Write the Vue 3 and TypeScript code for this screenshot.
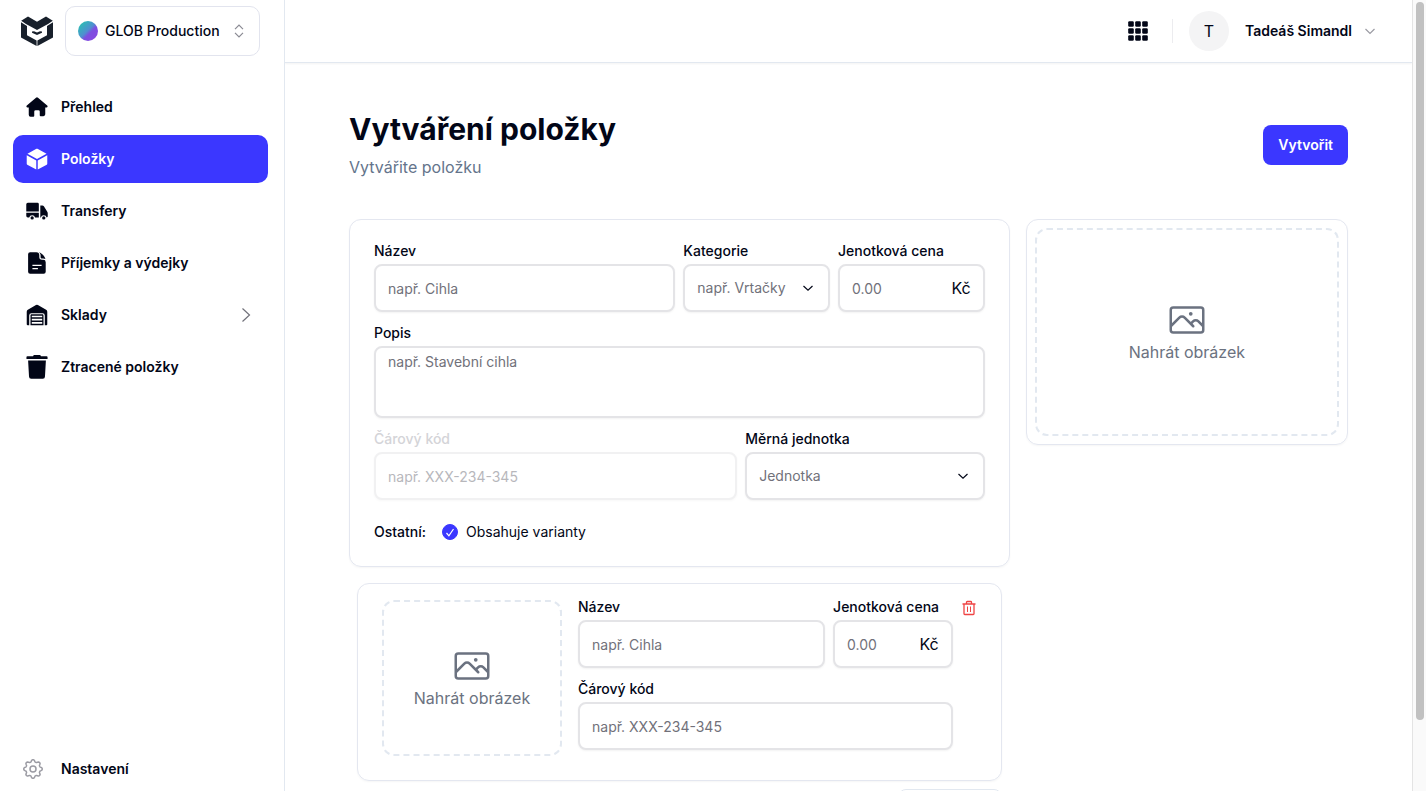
<script setup lang="ts">
import { ref } from 'vue'

interface NavItem {
  id: string
  label: string
  active?: boolean
  expandable?: boolean
}

const navItems: NavItem[] = [
  { id: 'home', label: 'Přehled' },
  { id: 'items', label: 'Položky', active: true },
  { id: 'transfers', label: 'Transfery' },
  { id: 'receipts', label: 'Příjemky a výdejky' },
  { id: 'stores', label: 'Sklady', expandable: true },
  { id: 'lost', label: 'Ztracené položky' },
]

const hasVariants = ref<boolean>(true)

function gearOutline(): string {
  const points: string[] = []
  for (let i = 0; i < 96; i++) {
    const a = (i / 96) * Math.PI * 2
    const r = 8.2 + 1.1 * Math.tanh(1.6 * Math.cos(8 * a))
    points.push(`${(12 + r * Math.sin(a)).toFixed(2)} ${(12 - r * Math.cos(a)).toFixed(2)}`)
  }
  return `M${points.join('L')}Z`
}

const gearPath: string = gearOutline()
const photoPath =
  'm2.25 15.75 5.159-5.159a2.25 2.25 0 0 1 3.182 0l5.159 5.159m-1.5-1.5 1.409-1.409a2.25 2.25 0 0 1 3.182 0l2.909 2.909m-18 3.75h16.5a1.5 1.5 0 0 0 1.5-1.5V6a1.5 1.5 0 0 0-1.5-1.5H3.75A1.5 1.5 0 0 0 2.25 6v12a1.5 1.5 0 0 0 1.5 1.5Zm10.5-11.25h.008v.008h-.008V8.25Zm.375 0a.375.375 0 1 1-.75 0 .375.375 0 0 1 .75 0Z'
</script>

<template>
  <div class="app">
    <aside class="sidebar">
      <div class="brand">
        <svg class="logo" viewBox="0 0 32 30" fill="#18202b" aria-hidden="true">
          <path d="M.2 4.800 7 .4l9 5.300 9-5.300 6.800 4.400-4.800 3.200-11 6L5 8Z" />
          <path d="M0 6.300 6 9.900V19.200l9.600 5.200V29.900L0 21.600Z" />
          <path d="M32 6.300 26 9.900V19.200l-9.600 5.200V29.900L32 21.600Z" />
          <path d="m11 15.600 2-.4 3 1.400 3-1.400 2 .4v1.200L16 19 11 16.800Z" />
        </svg>
        <button class="workspace" type="button">
          <span class="swatch"></span>
          <span class="workspace-name">GLOB Production</span>
          <svg class="sorter" viewBox="0 0 12 16" fill="none" stroke="#8a8a93" stroke-width="1.200" aria-hidden="true">
            <path d="M2 6.200 6 2.200l4 4M2 9.800l4 4 4-4" />
          </svg>
        </button>
      </div>

      <nav class="nav">
        <a v-for="item in navItems" :key="item.id" href="#" class="nav-item" :class="{ active: item.active }">
          <svg class="nav-icon" viewBox="0 0 24 24" fill="currentColor" aria-hidden="true">
            <template v-if="item.id === 'home'">
              <path d="M10.900 1.800a1.700 1.700 0 0 1 2.200 0l10 8.600c.9.800.4 2.100-.7 2.100H21v7.500a2 2 0 0 1-2 2h-3a1 1 0 0 1-1-1V17a1.500 1.500 0 0 0-1.500-1.500h-3A1.500 1.500 0 0 0 9 17v4.500a1 1 0 0 1-1 1H5a2 2 0 0 1-2-2V12.500H1.600C.5 12.500 0 11.200.9 10.400Z" />
            </template>
            <template v-else-if="item.id === 'items'">
              <path d="M12.500.9a1.200 1.200 0 0 0-1.100 0L1.600 6.300 12 12l10.400-5.700Z" />
              <path d="M.8 7.800v9.300c0 .5.200.9.600 1.100l9.800 5.300V13.500Z" />
              <path d="M23.200 7.800v9.300c0 .5-.2.9-.6 1.100l-9.800 5.300V13.500Z" />
            </template>
            <template v-else-if="item.id === 'transfers'">
              <path d="M2 3h10.500A1.500 1.500 0 0 1 14 4.500V12.500H.3V4.700A1.700 1.700 0 0 1 2 3Z" />
              <path d="M.3 14H14v5H9.900a3.300 3.300 0 0 0-6.400 0H2a1.700 1.700 0 0 1-1.700-1.700Z" />
              <path d="M15.600 6h2.200c.7 0 1.300.3 1.700.9l3.700 6c.3.5.5 1 .5 1.600v3.300c0 .7-.4 1.200-1.100 1.200a3.300 3.300 0 0 0-6.400 0h-.6Z" />
              <circle cx="6.700" cy="19.600" r="1.800" />
              <circle cx="19.400" cy="19.600" r="1.800" />
            </template>
            <template v-else-if="item.id === 'receipts'">
              <path fill-rule="evenodd" d="M4.500.3h6.800A3.200 3.200 0 0 1 14.500 3.500v2a3 3 0 0 0 3 3h1.300a2.700 2.700 0 0 1 2.700 2.700V21.500a2.200 2.200 0 0 1-2.200 2.200H4.500a2.200 2.200 0 0 1-2.200-2.200v-19A2.200 2.200 0 0 1 4.500.3ZM7 13.800v1.500h10v-1.500Zm0 3.600v1.500h6v-1.500Z" />
              <path d="M13.800.4c3.700 1 6.300 3.700 7.400 7.300a5 5 0 0 0-2.400-.7h-1.600a1.300 1.300 0 0 1-1.300-1.300V3.500c0-1.200-.9-2.400-2.100-3.100Z" />
            </template>
            <template v-else-if="item.id === 'stores'">
              <path d="M10.900 1.100a2 2 0 0 1 2.100 0l8.900 5.200a2.400 2.400 0 0 1 1.300 2.100V22c0 .7-.5 1.200-1.200 1.200h-1.500V12.500A2.500 2.500 0 0 0 18 10H6a2.500 2.500 0 0 0-2.500 2.500v10.700H2A1.200 1.200 0 0 1 .8 22V8.400c0-.9.400-1.600 1.200-2.100Z" />
              <path fill-rule="evenodd" d="M6.300 11.300h11.400c.8 0 1.400.6 1.400 1.400v10.500H4.900V12.700c0-.8.600-1.400 1.400-1.400Zm0 1.500v1.700h11.400v-1.700Zm0 3.200v2h11.400v-2Zm0 3.500v2h11.400v-2Z" />
            </template>
            <template v-else>
              <path d="M8.500-1h7l.8 1.200H22.500c.6 0 1 .4 1 1v2H.5v-2c0-.6.400-1 1-1h6.200Z" />
              <path d="M2.300 4.800h19.400l-1 17.600a2.400 2.400 0 0 1-2.400 2.400H5.700a2.400 2.400 0 0 1-2.400-2.400Z" />
            </template>
          </svg>
          <span class="nav-label">{{ item.label }}</span>
          <svg v-if="item.expandable" class="nav-arrow" viewBox="0 0 16 16" fill="none" stroke="#71717a" stroke-width="1.200" aria-hidden="true">
            <path d="m4.500 1.500 7 6.500-7 6.500" />
          </svg>
        </a>
      </nav>

      <a href="#" class="nav-item settings">
        <svg class="nav-icon gear" viewBox="0 0 24 24" fill="none" stroke="#9b9ba3" stroke-width="1.500" stroke-linejoin="round" aria-hidden="true">
          <path :d="gearPath" />
          <circle cx="12" cy="12" r="3" />
        </svg>
        <span class="nav-label">Nastavení</span>
      </a>
    </aside>

    <div class="main">
      <header class="topbar">
        <button class="icon-button" type="button" aria-label="Aplikace">
          <svg class="apps" viewBox="0 0 20 20" fill="#020617" aria-hidden="true">
            <template v-for="row in 3" :key="row">
              <rect v-for="col in 3" :key="col" :x="(col - 1) * 7 + 0.2" :y="(row - 1) * 7 + 0.2" width="5.600" height="5.600" rx="1.200" />
            </template>
          </svg>
        </button>
        <span class="divider"></span>
        <button class="account" type="button">
          <span class="avatar">T</span>
          <span class="account-name">Tadeáš Simandl</span>
          <svg class="chevron" viewBox="0 0 12 12" fill="none" stroke="#9b9ba3" stroke-width="1.200" aria-hidden="true">
            <path d="m1.500 4 4.500 4.500L10.500 4" />
          </svg>
        </button>
      </header>

      <main class="content">
        <div class="heading">
          <div>
            <h1>Vytváření položky</h1>
            <p>Vytvářite položku</p>
          </div>
          <button class="primary" type="submit" form="item-form">Vytvořit</button>
        </div>

        <div class="columns">
          <form id="item-form" class="form" @submit.prevent>
            <section class="card fields">
              <div class="row quarters">
                <div class="field span-2">
                  <label for="name">Název</label>
                  <input id="name" class="control" type="text" placeholder="např. Cihla" />
                </div>
                <div class="field">
                  <label for="category">Kategorie</label>
                  <div class="select-wrap">
                    <select id="category" class="control">
                      <option>např. Vrtačky</option>
                    </select>
                    <svg class="select-icon" viewBox="0 0 12 12" fill="none" stroke="#020617" stroke-width="1.200" aria-hidden="true">
                      <path d="m1.500 4 4.500 4.200L10.500 4" />
                    </svg>
                  </div>
                </div>
                <div class="field">
                  <label for="price">Jenotková cena</label>
                  <div class="control money">
                    <input id="price" type="text" inputmode="decimal" placeholder="0.00" />
                    <span>Kč</span>
                  </div>
                </div>
              </div>

              <div class="field">
                <label for="description">Popis</label>
                <textarea id="description" class="control" placeholder="např. Stavební cihla"></textarea>
              </div>

              <div class="row fifths">
                <div class="field span-3 disabled">
                  <label for="barcode">Čárový kód</label>
                  <input id="barcode" class="control" type="text" placeholder="např. XXX-234-345" disabled />
                </div>
                <div class="field span-2">
                  <label for="unit">Měrná jednotka</label>
                  <div class="select-wrap">
                    <select id="unit" class="control">
                      <option>Jednotka</option>
                    </select>
                    <svg class="select-icon" viewBox="0 0 12 12" fill="none" stroke="#020617" stroke-width="1.200" aria-hidden="true">
                      <path d="m1.500 4 4.500 4.200L10.500 4" />
                    </svg>
                  </div>
                </div>
              </div>

              <div class="others">
                <span class="others-title">Ostatní:</span>
                <label class="check" for="variants">
                  <span class="check-box">
                    <input id="variants" v-model="hasVariants" type="checkbox" />
                    <svg v-if="hasVariants" viewBox="0 0 16 16" fill="none" stroke="#fff" stroke-width="1.200" aria-hidden="true">
                      <path d="m4.500 9 2.400 2.800L11.500 5" />
                    </svg>
                  </span>
                  Obsahuje varianty
                </label>
              </div>
            </section>

            <section v-if="hasVariants" class="card variant">
              <button class="upload variant-upload" type="button">
                <svg viewBox="0 0 24 24" fill="none" stroke="currentColor" stroke-width="1.500" stroke-linecap="round" stroke-linejoin="round" aria-hidden="true">
                  <path :d="photoPath" />
                </svg>
                <span>Nahrát obrázek</span>
              </button>
              <div class="variant-fields">
                <div class="row thirds">
                  <div class="field span-2">
                    <label for="variant-name">Název</label>
                    <input id="variant-name" class="control" type="text" placeholder="např. Cihla" />
                  </div>
                  <div class="field">
                    <label for="variant-price">Jenotková cena</label>
                    <div class="control money">
                      <input id="variant-price" type="text" inputmode="decimal" placeholder="0.00" />
                      <span>Kč</span>
                    </div>
                  </div>
                </div>
                <div class="field">
                  <label for="variant-barcode">Čárový kód</label>
                  <input id="variant-barcode" class="control" type="text" placeholder="např. XXX-234-345" />
                </div>
              </div>
              <button class="remove" type="button" aria-label="Odstranit variantu">
                <svg viewBox="0 0 16 16" fill="none" stroke="#ef4444" stroke-width="1.300" stroke-linejoin="round" aria-hidden="true">
                  <path d="M1.500 4h13M5.500 4V2.300c0-.5.300-.8.800-.8h3.400c.5 0 .8.300.8.800V4M3 4v9.700c0 .5.300.8.800.8h8.400c.5 0 .8-.3.800-.8V4" />
                  <path stroke-width="1" d="M6.500 6.500V12M9.500 6.500V12" />
                </svg>
              </button>
            </section>

            <button v-if="hasVariants" class="add" type="button" aria-label="Přidat variantu"></button>
          </form>

          <section class="card picture">
            <button class="upload" type="button">
              <svg viewBox="0 0 24 24" fill="none" stroke="currentColor" stroke-width="1.500" stroke-linecap="round" stroke-linejoin="round" aria-hidden="true">
                <path :d="photoPath" />
              </svg>
              <span>Nahrát obrázek</span>
            </button>
          </section>
        </div>
      </main>
    </div>

    <div class="scrollbar" aria-hidden="true">
      <div class="thumb"></div>
    </div>
  </div>
</template>

<style>
html,
body {
  background: #fff;
  overflow: hidden;
}
</style>

<style scoped>
.app,
.app * {
  box-sizing: border-box;
}

.app {
  display: flex;
  height: 100vh;
  overflow: hidden;
  color: #020617;
  font-family: Inter, 'Liberation Sans', sans-serif;
  font-size: 14px;
  line-height: 20px;
}

button,
input,
select,
textarea {
  margin: 0;
  font: inherit;
  color: inherit;
}

button {
  padding: 0;
  border: 0;
  background: none;
  cursor: pointer;
}

a {
  color: inherit;
  text-decoration: none;
}

svg {
  display: block;
  flex: none;
}

.sidebar {
  display: flex;
  flex: none;
  flex-direction: column;
  width: 285px;
  padding: 6px 16px 0 13px;
  border-right: 1px solid #e2e8f0;
}

.brand {
  display: flex;
  align-items: center;
  gap: 12px;
  padding: 0 8px;
}

.logo {
  width: 32px;
  height: 30px;
}

.workspace {
  display: flex;
  flex: 1;
  align-items: center;
  gap: 7px;
  height: 50px;
  padding: 0 14px 0 12px;
  border: 1px solid #e2e4ee;
  border-radius: 10px;
  font-weight: 500;
  text-align: left;
}

.swatch {
  width: 20px;
  height: 20px;
  border-radius: 50%;
  background: linear-gradient(135deg, #2fb9b6 15%, #4f8fd0 48%, #7c4fe0 60%, #8b45e0);
}

.workspace-name {
  flex: 1;
  white-space: nowrap;
}

.sorter {
  width: 12px;
  height: 16px;
}

.nav {
  display: flex;
  flex-direction: column;
  gap: 4px;
  margin-top: 27px;
}

.nav-item {
  display: flex;
  align-items: center;
  gap: 13px;
  height: 48px;
  padding: 0 14px 0 13px;
  border-radius: 10px;
  font-weight: 600;
}

.nav-item.active {
  background: #3b37ff;
  color: #fff;
}

.nav-icon {
  width: 22px;
  height: 22px;
  overflow: visible;
}

.nav-label {
  flex: 1;
}

.nav-arrow {
  width: 16px;
  height: 16px;
}

.settings {
  gap: 16px;
  margin-top: auto;
  padding-left: 8px;
  margin-bottom: -2px;
}

.gear {
  width: 24px;
  height: 24px;
}

.main {
  flex: 1;
  min-width: 0;
  overflow: hidden;
}

.topbar {
  display: flex;
  align-items: center;
  justify-content: flex-end;
  height: 63px;
  padding-right: 36px;
  border-bottom: 1px solid #e2e8f0;
  box-shadow: 0 1px 2px #0000000d;
}

.apps {
  width: 20px;
  height: 20px;
}

.divider {
  width: 1px;
  height: 24px;
  margin: 0 16px 0 24px;
  background: #ececef;
}

.account {
  display: flex;
  align-items: center;
  font-weight: 600;
}

.avatar {
  width: 40px;
  height: 40px;
  margin-right: 16px;
  border-radius: 50%;
  background: #f4f4f5;
  font-size: 16px;
  font-weight: 400;
  line-height: 40px;
  text-align: center;
}

.chevron {
  width: 12px;
  height: 12px;
  margin-left: 12px;
}

.content {
  padding: 48px 64px 0;
}

.heading {
  display: flex;
  align-items: center;
  justify-content: space-between;
  margin-bottom: 40px;
}

h1 {
  margin: 0;
  font-size: 30px;
  font-weight: 700;
  line-height: 36px;
}

p {
  margin: 8px 0 0;
  color: #64748b;
  font-size: 16px;
  line-height: 24px;
}

.primary {
  height: 40px;
  padding: 0 15px;
  border-radius: 8px;
  background: #3b37ff;
  color: #fff;
  font-weight: 600;
}

.columns {
  display: grid;
  grid-template-columns: repeat(3, minmax(0, 1fr));
  align-items: start;
  gap: 16px;
}

.form {
  display: flex;
  grid-column: span 2;
  flex-direction: column;
}

.card {
  border: 1px solid #e4e7f0;
  border-radius: 12px;
  box-shadow: 0 1px 2px #0000000a;
}

.fields {
  display: flex;
  flex-direction: column;
  gap: 11px;
  padding: 21px 24px 24px;
}

.row {
  display: grid;
  gap: 8px;
}

.quarters {
  grid-template-columns: repeat(4, minmax(0, 1fr));
}

.fifths {
  grid-template-columns: repeat(5, minmax(0, 1fr));
}

.thirds {
  grid-template-columns: repeat(3, minmax(0, 1fr));
}

.span-2 {
  grid-column: span 2;
}

.span-3 {
  grid-column: span 3;
}

.field {
  display: flex;
  flex-direction: column;
  gap: 3px;
  min-width: 0;
}

.field label {
  font-weight: 500;
  white-space: nowrap;
}

.control {
  display: block;
  width: 100%;
  height: 48px;
  padding: 0 12px;
  border: 2px solid #e4e4e7;
  border-radius: 8px;
  outline: 0;
  background: #fff;
  box-shadow: 0 1px 2px #0000000d;
}

.control::placeholder,
.money input::placeholder {
  color: #71717a;
  opacity: 1;
}

select.control {
  appearance: none;
  color: #71717a;
}

textarea.control {
  height: 72px;
  padding: 4px 12px;
  resize: none;
}

.select-wrap {
  display: grid;
  align-items: center;
}

.select-wrap > * {
  grid-area: 1 / 1;
}

.select-icon {
  justify-self: end;
  width: 12px;
  height: 12px;
  margin-right: 16px;
  pointer-events: none;
}

.money {
  display: flex;
  align-items: center;
}

.money input {
  flex: 1;
  width: 100%;
  min-width: 0;
  height: 100%;
  padding: 0;
  border: 0;
  outline: 0;
  background: none;
}

.money span {
  font-size: 16px;
}

.disabled label {
  color: #d4d4d8;
}

.disabled .control {
  opacity: 0.5;
}

.others {
  display: flex;
  align-items: center;
  gap: 16px;
  margin-top: 11px;
}

.others-title {
  font-weight: 500;
}

.check {
  display: flex;
  align-items: center;
  gap: 8px;
}

.check-box {
  display: grid;
  width: 16px;
  height: 16px;
}

.check-box > * {
  grid-area: 1 / 1;
}

.check-box input {
  appearance: none;
  width: 16px;
  height: 16px;
  border: 1px solid #3b37ff;
  border-radius: 50%;
}

.check-box input:checked {
  background: #3b37ff;
}

.check-box svg {
  pointer-events: none;
}

.variant {
  display: flex;
  align-items: flex-start;
  margin: 16px 8px 0;
  padding: 13px 24px 24px;
}

.upload {
  display: flex;
  flex-direction: column;
  align-items: center;
  justify-content: center;
  width: 100%;
  height: 208px;
  border: 2px dashed #e2e8f0;
  border-radius: 12px;
  color: #6b7280;
  font-size: 16px;
  line-height: 24px;
}

.upload svg {
  width: 40px;
  height: 40px;
}

.variant-upload {
  flex: none;
  width: 180px;
  height: 156px;
  margin: 3px 16px 0 0;
}

.variant-fields {
  display: flex;
  flex: 1;
  flex-direction: column;
  gap: 11px;
  min-width: 0;
}

.remove {
  margin: 3px 0 0 8px;
}

.remove svg {
  width: 16px;
  height: 16px;
}

.add {
  align-self: flex-end;
  width: 104px;
  height: 40px;
  margin: 8px 8px 0;
  border: 1px solid #e2e8f0;
  border-radius: 8px;
}

.picture {
  padding: 8px;
}

.scrollbar {
  flex: none;
  width: 14px;
  padding: 2px 2px 0 3px;
  border-left: 1px solid #e4e4e4;
  background: #fafafa;
}

.thumb {
  height: 91%;
  border-radius: 4px;
  background: #c1c1c1;
}
</style>
